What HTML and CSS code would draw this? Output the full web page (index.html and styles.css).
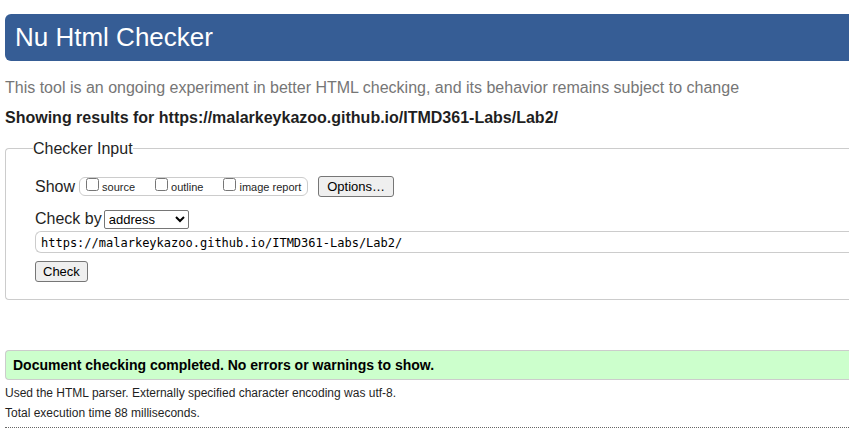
FILE: index.html
```
<!DOCTYPE html>
<html lang="en">
<head>
<meta charset="utf-8">
<title>Nu Html Checker</title>
<link rel="stylesheet" href="styles.css">
</head>
<body>
<header class="banner"><h1>Nu Html Checker</h1></header>
<main>
<p class="notice">This tool is an ongoing experiment in better HTML checking, and its behavior remains subject to change</p>
<h2 class="title">Showing results for https://malarkeykazoo.github.io/ITMD361-Labs/Lab2/</h2>
<form>
<fieldset class="panel">
<legend>Checker Input</legend>
<div class="row show-row">
<span>Show</span>
<div class="toggles">
<label><input type="checkbox">source</label>
<label><input type="checkbox">outline</label>
<label><input type="checkbox">image report</label>
</div>
<button type="button">Options…</button>
</div>
<div class="row">
<label for="method">Check by</label>
<select id="method"><option>address</option><option>file upload</option><option>text input</option></select>
</div>
<input class="address" type="text" aria-label="Address" value="https://malarkeykazoo.github.io/ITMD361-Labs/Lab2/">
<button type="button">Check</button>
</fieldset>
</form>
<p class="success">Document checking completed. No errors or warnings to show.</p>
<div class="details">
<p>Used the HTML parser. Externally specified character encoding was utf-8.</p>
<p>Total execution time 88 milliseconds.</p>
</div>
</main>
</body>
</html>
```
FILE: styles.css
```
* { box-sizing: border-box; }

body {
  margin: 0;
  padding: 14px 0 0 5px;
  background: #fff;
  color: #1f1f1f;
  font: 16px/20px "Liberation Sans", Arial, sans-serif;
}

h1, h2, p { margin: 0; }

.banner {
  padding: 8px 10px 9px;
  border-radius: 6px 0 0 6px;
  background: #365d95;
  color: #fff;
}

.banner h1 { font-size: 26px; font-weight: 400; line-height: 30px; }

.notice { margin-top: 17px; color: #767676; }

.title { margin-top: 10px; font-size: 16px; line-height: 20px; }

.panel {
  min-width: 0;
  margin: 9px 0 0;
  padding: 17px 0 17px 29px;
  border: 1px solid #ccc;
  border-right: 0;
  border-radius: 4px 0 0 4px;
}

.panel legend { margin-left: -2px; padding: 2px 0 0; }

.row { display: flex; align-items: center; gap: 2px; }

.show-row { gap: 4px; margin-bottom: 12px; }

.toggles {
  display: flex;
  align-items: center;
  gap: 20px;
  height: 19px;
  margin-right: 6px;
  padding: 0 6px;
  border: 1px solid #ccc;
  border-radius: 6px;
  font-size: 11px;
  line-height: 16px;
}

.toggles label { display: flex; align-items: flex-end; gap: 3px; }

.toggles input { width: 13px; height: 13px; margin: 0 0 4px; }

button {
  display: block;
  height: 21px;
  padding: 0 7px;
  border: 1px solid #767676;
  border-radius: 3px;
  background: #efefef;
  color: #000;
  font: 13px/18px "Liberation Sans", Arial, sans-serif;
}

.show-row button { padding: 0 8px; }

select {
  width: 85px;
  height: 19px;
  padding: 0;
  border: 1px solid #767676;
  border-radius: 2px;
  background: #fff;
  color: #000;
  font: 13px "Liberation Sans", Arial, sans-serif;
}

.address {
  display: block;
  width: 100%;
  height: 22px;
  margin: 2px 0 8px;
  padding: 2px 5px 0;
  border: 1px solid #ccc;
  border-right: 0;
  border-radius: 6px 0 0 6px;
  color: #000;
  font: 12px "DejaVu Sans Mono", monospace;
}

.success {
  margin-top: 50px;
  padding: 4px 7px;
  border: 1px solid #ccc;
  border-right: 0;
  border-radius: 4px 0 0 4px;
  background: #cfc;
  color: #000;
  font-size: 14px;
  font-weight: 700;
}

.details {
  padding: 3px 0 4px;
  border-bottom: 1px dotted #666;
  font-size: 12px;
}
```
